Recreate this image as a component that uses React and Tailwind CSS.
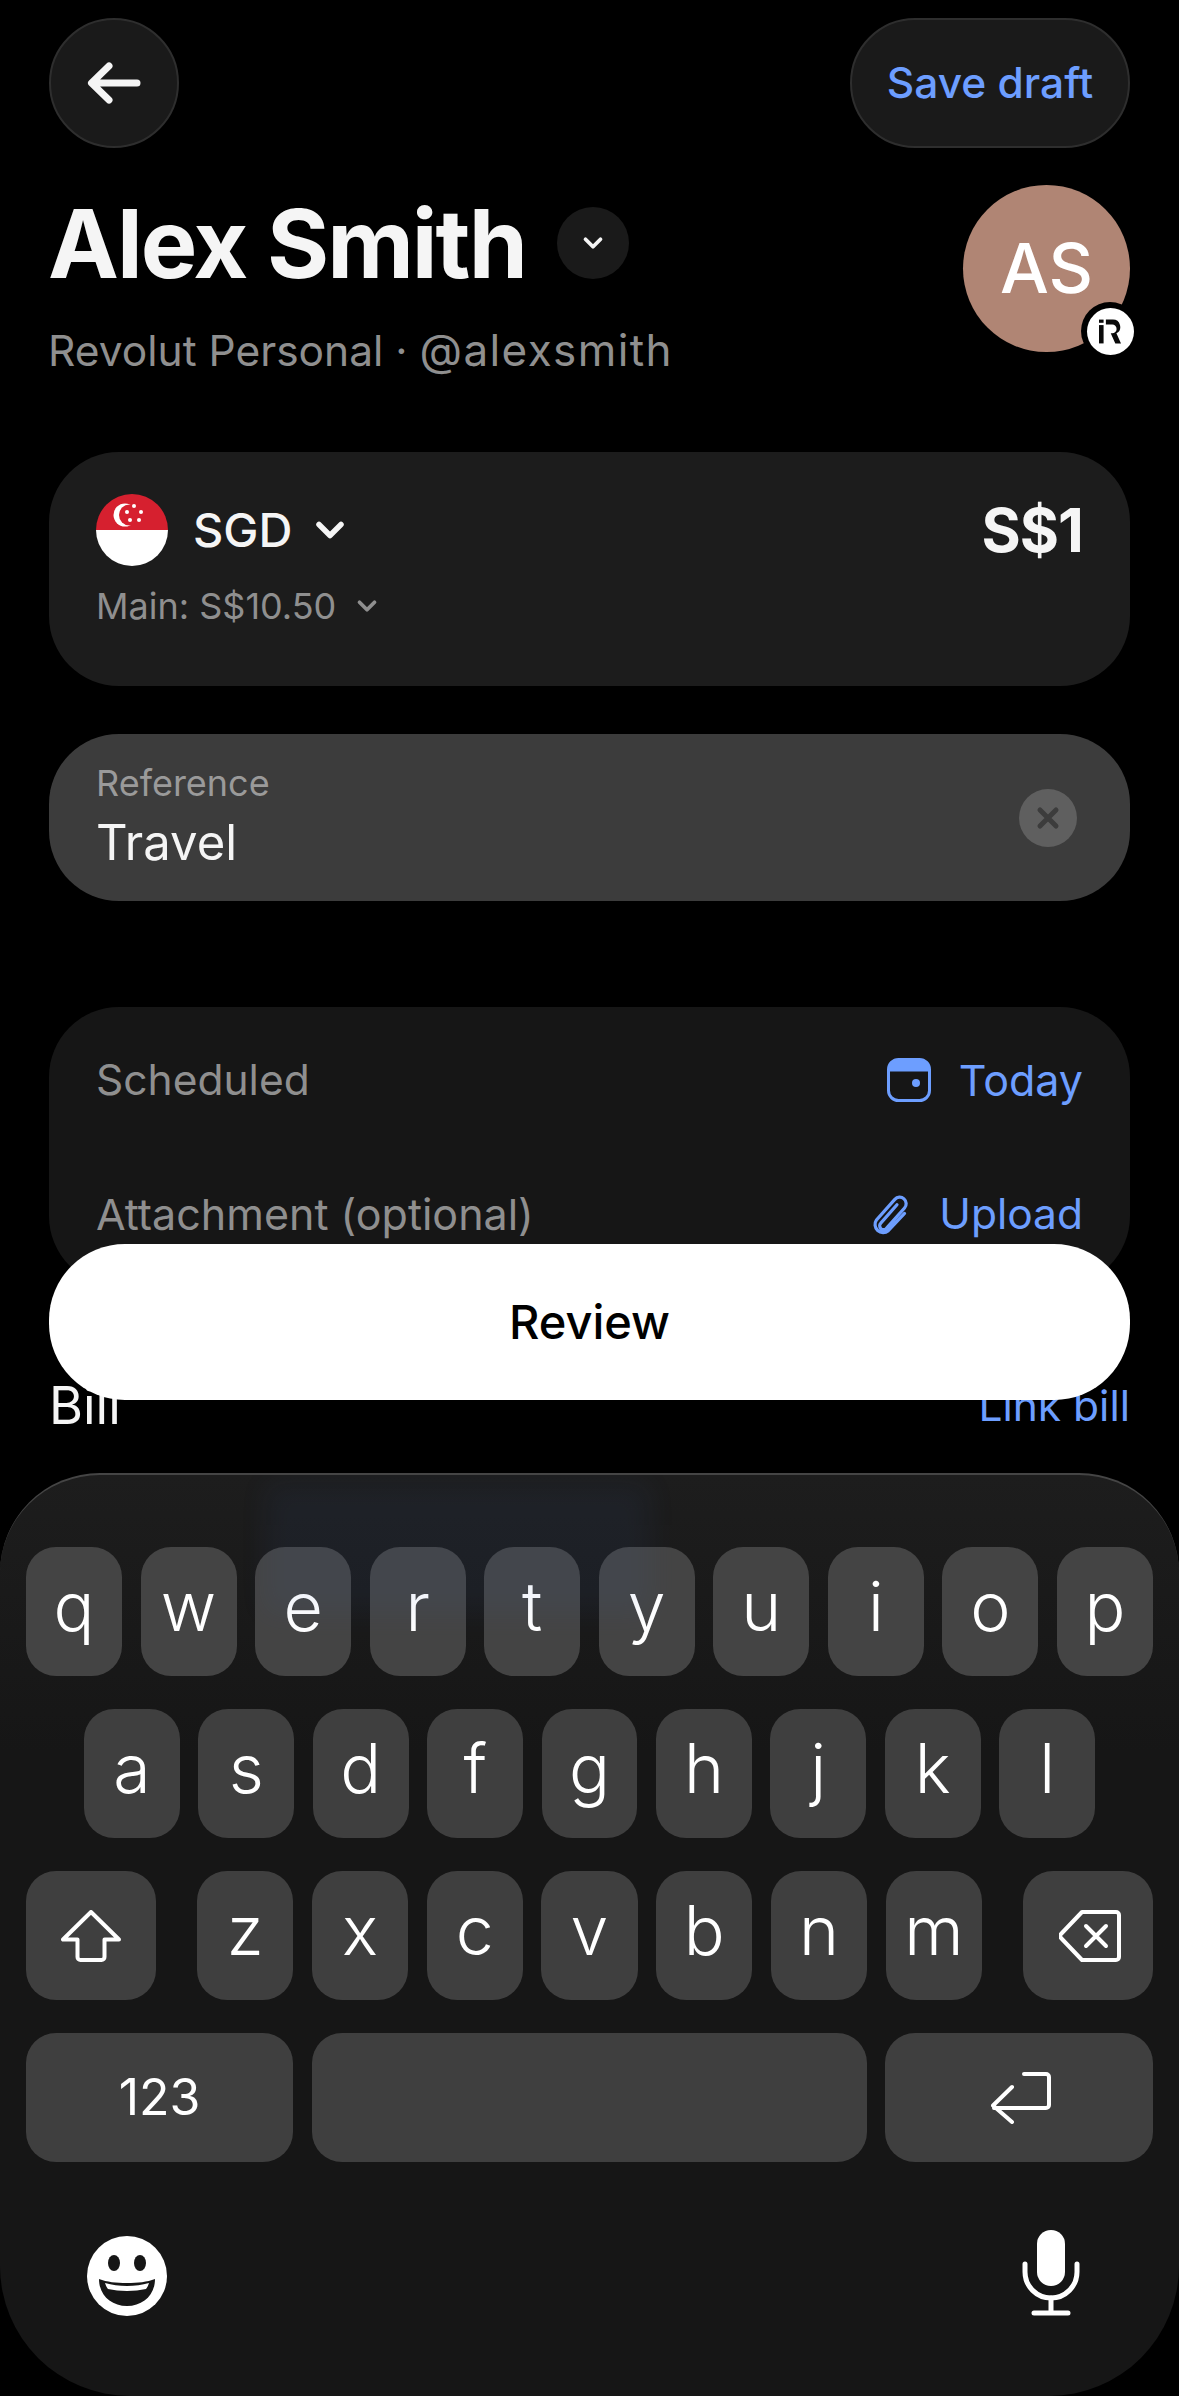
import { ChevronDown } from 'lucide-react'

const rowOne = ['q', 'w', 'e', 'r', 't', 'y', 'u', 'i', 'o', 'p']
const rowTwo = ['a', 's', 'd', 'f', 'g', 'h', 'j', 'k', 'l']
const rowThree = ['z', 'x', 'c', 'v', 'b', 'n', 'm']

function Key({ children, className = 'bg-[#3f3f3f]' }) {
  return (
    <div className={`h-[129px] rounded-[30px] flex items-center justify-center text-white ${className}`}>
      {children}
    </div>
  )
}

function LetterKey({ label, className = '' }) {
  return (
    <Key className={className}>
      <span className="text-[68px] font-[350] leading-none -translate-y-[6px]">{label}</span>
    </Key>
  )
}

function BackArrow() {
  return (
    <svg width="54" height="42" viewBox="0 0 54 42" fill="none" stroke="#f5f5f5" strokeWidth="7" strokeLinecap="round" strokeLinejoin="round">
      <path d="M50 21H5M22 4 4.500 21 22 38" />
    </svg>
  )
}

function RevolutBadge() {
  return (
    <div className="absolute left-[118px] top-[117px] w-[58px] h-[58px] rounded-full bg-black flex items-center justify-center">
      <div className="w-[47px] h-[47px] rounded-full bg-white flex items-center justify-center">
        <svg width="22" height="27" viewBox="0 0 24 26" fill="#0a0a0a">
          <rect x="0" y="0" width="5" height="3.500" />
          <rect x="0" y="6" width="5" height="20" />
          <path d="M7.500 0H15a8 8 0 0 1 4 15l5 11h-6.200l-5-11h1.600a3.400 3.400 0 0 0 0-9.600H7.500z" />
        </svg>
      </div>
    </div>
  )
}

function SingaporeFlag() {
  return (
    <svg width="72" height="72" viewBox="0 0 72 72" className="shrink-0">
      <defs>
        <clipPath id="flagClip">
          <circle cx="36" cy="36" r="36" />
        </clipPath>
      </defs>
      <g clipPath="url(#flagClip)">
        <rect width="72" height="36" fill="#d6202f" />
        <rect y="36" width="72" height="36" fill="#ffffff" />
        <circle cx="29" cy="21" r="11.500" fill="#ffffff" />
        <circle cx="33.500" cy="21" r="10.500" fill="#d6202f" />
        <circle cx="38" cy="12" r="2" fill="#ffffff" />
        <circle cx="31" cy="18" r="2" fill="#ffffff" />
        <circle cx="45" cy="18" r="2" fill="#ffffff" />
        <circle cx="34" cy="26" r="2" fill="#ffffff" />
        <circle cx="43" cy="26" r="2" fill="#ffffff" />
      </g>
    </svg>
  )
}

function CalendarIcon() {
  return (
    <svg width="44" height="44" viewBox="0 0 44 44" fill="none">
      <rect x="1.500" y="1.500" width="41" height="41" rx="10" stroke="#6d9eff" strokeWidth="3" />
      <path d="M1.500 13V11.500a10 10 0 0 1 10-10h21a10 10 0 0 1 10 10V13z" fill="#6d9eff" stroke="#6d9eff" strokeWidth="1" />
      <circle cx="29" cy="25" r="4" fill="#6d9eff" />
    </svg>
  )
}

function PaperclipIcon() {
  return (
    <svg width="37" height="41" viewBox="2 1 32 38" fill="none" stroke="#6d9eff" strokeWidth="3" strokeLinecap="round">
      <path d="M24 11 9 28a3.500 3.500 0 0 0 5 5L31 14a6 6 0 0 0-9-8L5 25a7.500 7.500 0 0 0 11 10l15-16" />
    </svg>
  )
}

function ShiftIcon() {
  return (
    <svg width="60" height="52" viewBox="0 0 60 52" fill="none" stroke="#ffffff" strokeWidth="4" strokeLinejoin="round">
      <path d="M30 2 2 29.500h14.500V47a3 3 0 0 0 3 3h21a3 3 0 0 0 3-3V29.500H58z" />
    </svg>
  )
}

function BackspaceIcon() {
  return (
    <svg width="62" height="52" viewBox="0 0 62 52" fill="none" stroke="#ffffff" strokeWidth="4" strokeLinecap="round" strokeLinejoin="round" className="translate-x-[2px]">
      <path d="M23 2h34a3 3 0 0 1 3 3v42a3 3 0 0 1-3 3H23L2 28a3 3 0 0 1 0-4z" />
      <path d="M27 16 47 36M47 16 27 36" />
    </svg>
  )
}

function ReturnIcon() {
  return (
    <svg width="60" height="52" viewBox="0 0 60 52" fill="none" stroke="#ffffff" strokeWidth="4" strokeLinecap="round" strokeLinejoin="round" className="translate-x-[2px]">
      <path d="M33 2h22a3 3 0 0 1 3 3v28a3 3 0 0 1-3 3H3" />
      <path d="M21 15 2 33.500 21 50" />
    </svg>
  )
}

function EmojiIcon() {
  return (
    <svg width="80" height="80" viewBox="0 0 80 80" className="mt-[6px]">
      <circle cx="40" cy="40" r="40" fill="#ffffff" />
      <ellipse cx="27" cy="27" rx="6" ry="8" fill="#161616" />
      <ellipse cx="53" cy="27" rx="6" ry="8" fill="#161616" />
      <path d="M12 43c8 3 17 4 28 4s20-1 28-4c0 16-12 27-28 27S12 59 12 43z" fill="#161616" />
      <path d="M18 47c7 2 14 3 22 3s15-1 22-3c-1 3-2 5-3 6-6 1-12 2-19 2s-13-1-19-2c-1-1-2-3-3-6z" fill="#ffffff" />
    </svg>
  )
}

function MicIcon() {
  return (
    <svg width="58" height="86" viewBox="0 0 58 86" fill="none" stroke="#ffffff" strokeWidth="5" strokeLinecap="round">
      <rect x="15" y="0" width="28" height="56" rx="14" fill="#ffffff" stroke="none" />
      <path d="M3 34v8a26 26 0 0 0 52 0v-8" />
      <path d="M29 68v15M12 83h34" />
    </svg>
  )
}

export default function App() {
  return (
    <div className="relative w-[1179px] h-[2396px] overflow-hidden bg-black font-['Inter',sans-serif] text-[#f5f5f5]">
      <div className="px-[49px] pt-[18px]">
        {/* Header */}
        <div className="flex items-center justify-between">
          <button className="w-[130px] h-[130px] rounded-full bg-[#1a1a1a] border-2 border-[#2e2e2e] flex items-center justify-center">
            <BackArrow />
          </button>
          <button className="w-[280px] h-[130px] rounded-[65px] bg-[#1a1a1a] border-2 border-[#2e2e2e] text-[#6d9eff] text-[42.500px] font-medium flex items-center justify-center">
            Save draft
          </button>
        </div>

        <div className="flex justify-between mt-[37px] h-[267px]">
          <div>
            <div className="flex items-center h-[110px] mt-[3px] -ml-[1px]">
              <h1 className="text-[95px] font-bold leading-none tracking-[-2px]">Alex Smith</h1>
              <div className="ml-[31px] w-[72px] h-[72px] rounded-full bg-[#1a1a1a] flex items-center justify-center">
                <ChevronDown size={30} color="#f5f5f5" strokeWidth={3} />
              </div>
            </div>
            <p className="mt-[24px] -ml-[1px] text-[42.500px] leading-[56px] text-[#8f8f8f]">
              Revolut Personal · <span className="text-[44px] tracking-[1.400px]">@alexsmith</span>
            </p>
          </div>
          <div className="relative w-[167px] h-[167px] rounded-full bg-[#b08574] flex items-center justify-center text-[69px] font-medium text-white">
            AS
            <RevolutBadge />
          </div>
        </div>

        {/* Amount */}
        <div className="h-[234px] rounded-[70px] bg-[#1c1c1c] px-[47px] pt-[42px]">
          <div className="flex items-center justify-between h-[72px]">
            <div className="flex items-center">
              <SingaporeFlag />
              <span className="ml-[25px] text-[47px] font-medium">SGD</span>
              <ChevronDown size={44} color="#f5f5f5" strokeWidth={3} className="ml-[16px]" />
            </div>
            <span className="text-[60px] font-bold tracking-[-1px]">S$1</span>
          </div>
          <div className="flex items-center mt-[17px]">
            <span className="text-[36px] leading-[46px] text-[#8f8f8f]">Main: S$10.50</span>
            <ChevronDown size={30} color="#8f8f8f" strokeWidth={3} className="ml-[16px]" />
          </div>
        </div>

        {/* Reference */}
        <div className="mt-[48px] h-[167px] rounded-[70px] bg-[#3c3c3c] px-[47px] flex items-center justify-between">
          <div className="mb-[3px]">
            <p className="text-[36px] leading-[44px] text-[#9a9a9a]">Reference</p>
            <p className="mt-[9px] text-[49px] leading-[58px]">Travel</p>
          </div>
          <div className="w-[58px] h-[58px] rounded-full bg-[#5f5f5f] flex items-center justify-center mr-[6px]">
            <svg width="24" height="24" viewBox="0 0 24 24" stroke="#3c3c3c" strokeWidth="5" strokeLinecap="round">
              <path d="M4 4 20 20M20 4 4 20" />
            </svg>
          </div>
        </div>

        {/* Details */}
        <div className="mt-[106px] h-[279px] rounded-[70px] bg-[#161616] px-[47px] pt-[48px] flex flex-col gap-[84px]">
          <div className="flex items-center justify-between h-[50px]">
            <span className="text-[42.500px] text-[#8f8f8f]">Scheduled</span>
            <div className="flex items-center gap-[28px] text-[43px] text-[#6d9eff]">
              <CalendarIcon />
              Today
            </div>
          </div>
          <div className="flex items-center justify-between h-[50px]">
            <span className="text-[43px] text-[#8f8f8f]">Attachment (optional)</span>
            <div className="flex items-center gap-[30px] text-[42.500px] text-[#6d9eff]">
              <PaperclipIcon />
              Upload
            </div>
          </div>
        </div>

        {/* Bill */}
        <div className="mt-[88px] flex items-center justify-between">
          <span className="text-[52px] leading-[64px]">Bill</span>
          <span className="text-[42.500px] leading-[64px] text-[#6d9eff]">Link bill</span>
        </div>
      </div>

      {/* Review button */}
      <button className="absolute left-[49px] top-[1244px] w-[1081px] h-[156px] rounded-[76px] bg-white text-black text-[47px] font-medium flex items-center justify-center">
        Review
      </button>

      {/* Keyboard */}
      <div className="absolute left-0 right-0 top-[1473px] h-[923px] rounded-t-[100px] rounded-b-[130px] border-t-2 border-[#454545] bg-linear-to-b from-[#1d1d1d] to-[#161616] to-[30%] px-[26px] pt-[72px] overflow-hidden">
        <div className="relative flex flex-col gap-[33px]">
          <div className="flex gap-[18.500px]">
            {rowOne.map((k) => <LetterKey key={k} label={k} className="flex-1 bg-[#444444]" />)}
          </div>
          <div className="flex gap-[18.500px] px-[58px]">
            {rowTwo.map((k) => <LetterKey key={k} label={k} className="flex-1 bg-[#3f3f3f]" />)}
          </div>
          <div className="flex justify-between">
            <Key className="w-[130px] bg-[#3f3f3f]"><ShiftIcon /></Key>
            <div className="flex gap-[18.500px] w-[785px]">
              {rowThree.map((k) => <LetterKey key={k} label={k} className="flex-1 bg-[#3f3f3f]" />)}
            </div>
            <Key className="w-[130px] bg-[#3f3f3f]"><BackspaceIcon /></Key>
          </div>
          <div className="flex gap-[18.500px]">
            <Key className="w-[267px] bg-[#3f3f3f]"><span className="text-[50px] font-normal">123</span></Key>
            <Key className="flex-1 bg-[#3f3f3f]" />
            <Key className="w-[268px] bg-[#3f3f3f]"><ReturnIcon /></Key>
          </div>
        </div>
        <div className="relative mt-[68px] flex items-center justify-between pl-[61px] pr-[73px]">
          <EmojiIcon />
          <MicIcon />
        </div>
        {/* blurred content showing through the keyboard */}
        <div className="absolute left-[265px] top-[8px] w-[385px] h-[130px] bg-[#3f66b8] opacity-[0.07] blur-[14px]" />
      </div>
    </div>
  )
}
